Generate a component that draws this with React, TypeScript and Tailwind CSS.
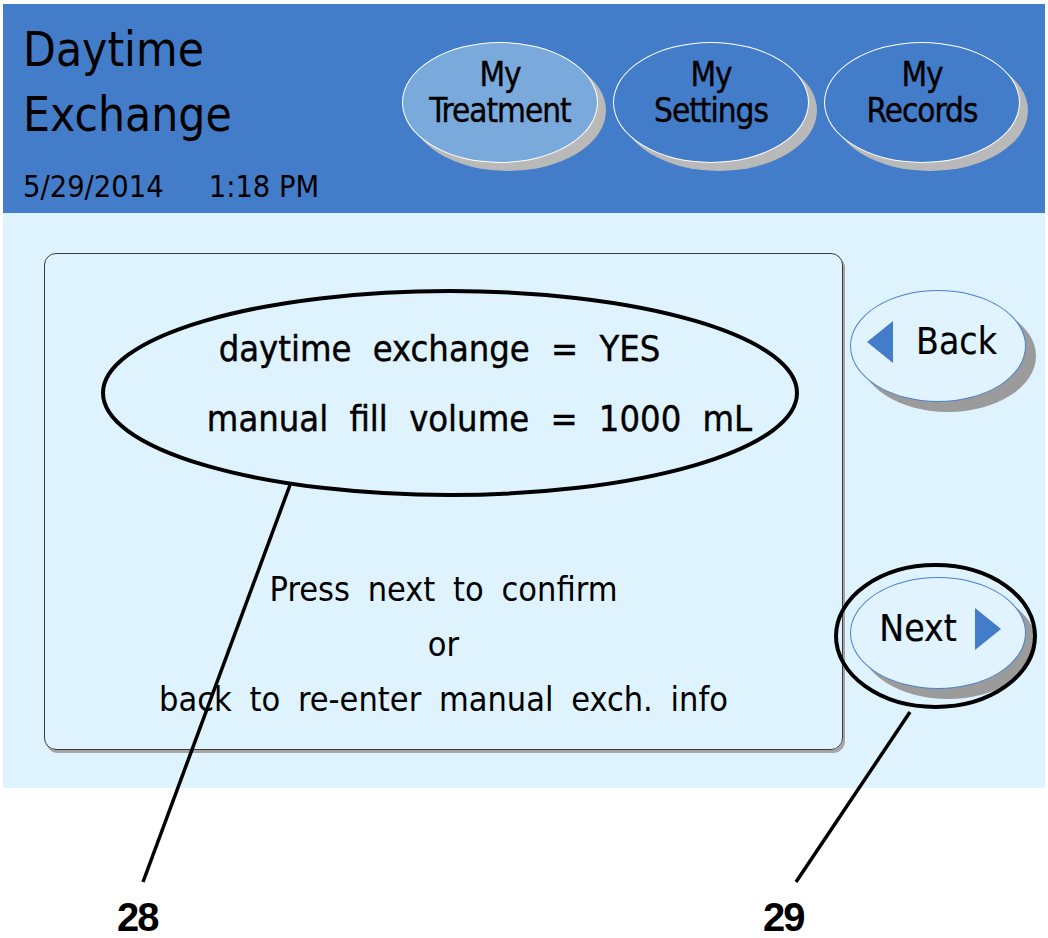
import React from "react";

const narrow = "font-['DejaVu_Sans_Condensed','Liberation_Sans',sans-serif]";

function HeaderButton({ top, bottom, active }: { top: string; bottom: string; active?: boolean }) {
  return (
    <div
      className={`flex h-[121px] w-[196px] flex-col items-center rounded-[50%] border-[1.5px] border-white pt-[14px] text-black shadow-[8px_8px_0_#b9b9b9] ${narrow} ${
        active ? "bg-[#7aaadc]" : "bg-[#437dc9]"
      }`}
    >
      <span className="text-[33px] leading-[36px] tracking-[-1px] [-webkit-text-stroke:0.4px_black]">{top}</span>
      <span className="text-[33px] leading-[36px] tracking-[-1px] [-webkit-text-stroke:0.4px_black]">{bottom}</span>
    </div>
  );
}

function Triangle({ dir }: { dir: "left" | "right" }) {
  return (
    <svg width="26" height="42" viewBox="0 0 26 42" className="shrink-0">
      {dir === "left" ? (
        <polygon points="26,0 26,42 0,21" fill="#437dc9" />
      ) : (
        <polygon points="0,0 0,42 26,21" fill="#437dc9" />
      )}
    </svg>
  );
}

function NavButton({ label, dir }: { label: string; dir: "left" | "right" }) {
  return (
    <div
      className={`flex h-[112px] w-[176px] items-center justify-center rounded-[50%] border border-[#4b80cf] bg-[#e0f3fe] pb-[8px] text-black shadow-[10px_10px_0_#9b9b9b] ${narrow} ${
        dir === "left" ? "gap-[23px] pr-[12px]" : "gap-[18px] pl-[4px]"
      }`}
    >
      {dir === "left" && <Triangle dir="left" />}
      <span className="text-[37px] leading-[46px] [-webkit-text-stroke:0.2px_black]">{label}</span>
      {dir === "right" && <Triangle dir="right" />}
    </div>
  );
}

export default function App() {
  return (
    <div className="relative h-[938px] w-[1048px] overflow-hidden bg-white font-['Liberation_Sans',Arial,sans-serif]">
      <div className="ml-[3px] w-[1042px] pt-[4px]">
        {/* header */}
        <div className="flex h-[209px] bg-[#437dc9]">
          <div className={`w-[399px] pl-[20px] pt-[13px] text-black ${narrow}`}>
            <div className="text-[47.5px] leading-[65px]">Daytime</div>
            <div className="text-[47.5px] leading-[65px]">Exchange</div>
            <div className="mt-[22px] flex text-[30.5px] leading-[36px]">
              <span>5/29/2014</span>
              <span className="ml-[45px]">1:18 PM</span>
            </div>
          </div>
          <div className="flex gap-[15px] pt-[38px]">
            <HeaderButton top="My" bottom="Treatment" active />
            <HeaderButton top="My" bottom="Settings" />
            <HeaderButton top="My" bottom="Records" />
          </div>
        </div>

        {/* content */}
        <div className="flex h-[575px] bg-[#dff3fe]">
          <div
            className={`ml-[41px] mt-[40px] flex h-[497px] w-[799px] flex-col items-center rounded-[12px] border-[1.5px] border-[#3a3a3a] pt-[60px] text-black shadow-[2px_3px_0_#a5a5a5] ${narrow}`}
          >
            <div className="pr-[8px] text-[36px] leading-[70px] [word-spacing:11px] [-webkit-text-stroke:0.4px_black]">
              daytime exchange = YES
            </div>
            <div className="pl-[72px] text-[36px] leading-[70px] [word-spacing:11px] [-webkit-text-stroke:0.4px_black]">
              manual fill volume = 1000 mL
            </div>
            <div className="mt-[108px] flex flex-col items-center text-[34px] leading-[55px] [word-spacing:8px]">
              <span>Press next to confirm</span>
              <span>or</span>
              <span>back to re-enter manual exch. info</span>
            </div>
          </div>
          <div className="ml-[7px] flex flex-col pt-[77px]">
            <NavButton label="Back" dir="left" />
            <div className="mt-[175px]">
              <NavButton label="Next" dir="right" />
            </div>
          </div>
        </div>
      </div>

      {/* callout annotations */}
      <svg className="pointer-events-none absolute left-0 top-0" width="1048" height="938" viewBox="0 0 1048 938">
        <ellipse cx="450" cy="393" rx="347" ry="102" fill="none" stroke="#000" strokeWidth="4" />
        <ellipse cx="935.5" cy="636" rx="99.5" ry="71" fill="none" stroke="#000" strokeWidth="4" />
        <line x1="290" y1="485" x2="143" y2="882" stroke="#000" strokeWidth="3.5" />
        <line x1="910" y1="712" x2="796" y2="882" stroke="#000" strokeWidth="3.5" />
      </svg>
      <span className="absolute left-[117px] top-[897px] text-[40px] font-bold leading-[40px] tracking-[-2px] text-black">28</span>
      <span className="absolute left-[763px] top-[897px] text-[40px] font-bold leading-[40px] tracking-[-2px] text-black">29</span>
    </div>
  );
}
